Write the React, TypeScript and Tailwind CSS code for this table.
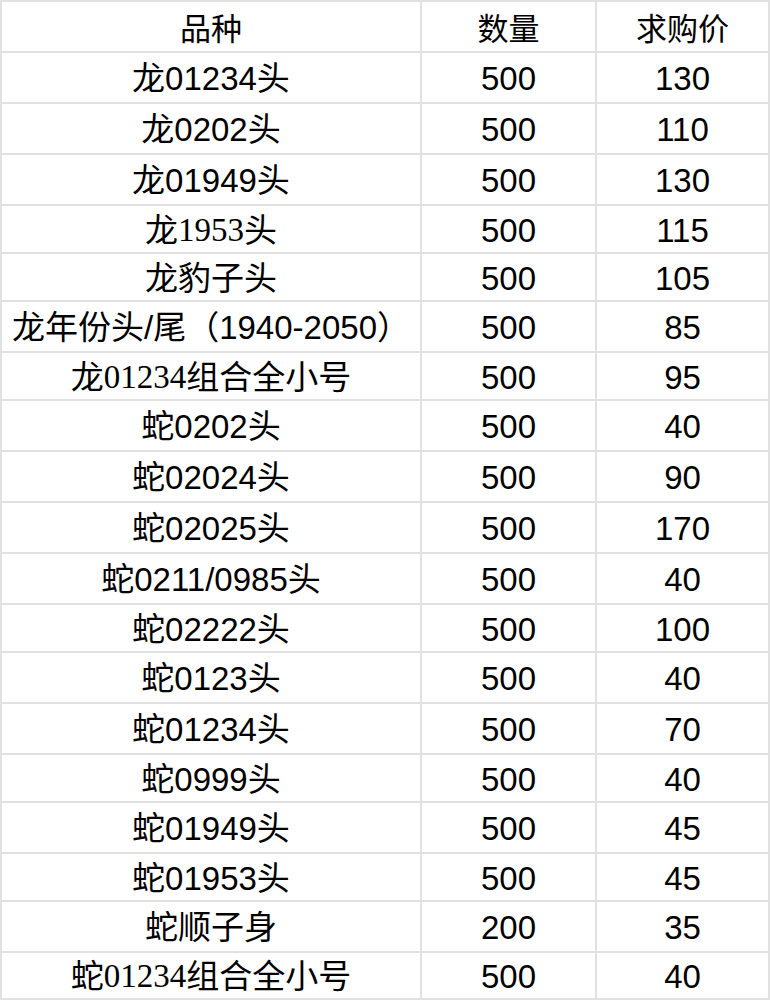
type Part = { text: string; serif?: boolean };

type Row = {
  name: Part[];
  qty: string;
  price: string;
  h: string;
};

const rows: Row[] = [
  { name: [{ text: '龙01234头' }], qty: '500', price: '130', h: 'h-[51px]' },
  { name: [{ text: '龙0202头' }], qty: '500', price: '110', h: 'h-[51px]' },
  { name: [{ text: '龙01949头' }], qty: '500', price: '130', h: 'h-[51px]' },
  { name: [{ text: '龙' }, { text: '1953', serif: true }, { text: '头' }], qty: '500', price: '115', h: 'h-[48px]' },
  { name: [{ text: '龙豹子头' }], qty: '500', price: '105', h: 'h-[48px]' },
  { name: [{ text: '龙年份头/尾（1940-2050）' }], qty: '500', price: '85', h: 'h-[51px]' },
  { name: [{ text: '龙' }, { text: '01234', serif: true }, { text: '组合全小号' }], qty: '500', price: '95', h: 'h-[48px]' },
  { name: [{ text: '蛇0202头' }], qty: '500', price: '40', h: 'h-[51px]' },
  { name: [{ text: '蛇02024头' }], qty: '500', price: '90', h: 'h-[51px]' },
  { name: [{ text: '蛇02025头' }], qty: '500', price: '170', h: 'h-[51px]' },
  { name: [{ text: '蛇0211/0985头' }], qty: '500', price: '40', h: 'h-[51px]' },
  { name: [{ text: '蛇02222头' }], qty: '500', price: '100', h: 'h-[48px]' },
  { name: [{ text: '蛇0123头' }], qty: '500', price: '40', h: 'h-[51px]' },
  { name: [{ text: '蛇01234头' }], qty: '500', price: '70', h: 'h-[51px]' },
  { name: [{ text: '蛇0999头' }], qty: '500', price: '40', h: 'h-[48px]' },
  { name: [{ text: '蛇01949头' }], qty: '500', price: '45', h: 'h-[51px]' },
  { name: [{ text: '蛇01953头' }], qty: '500', price: '45', h: 'h-[48px]' },
  { name: [{ text: '蛇顺子身' }], qty: '200', price: '35', h: 'h-[51px]' },
  { name: [{ text: '蛇' }, { text: '01234', serif: true }, { text: '组合全小号' }], qty: '500', price: '40', h: 'h-[47px]' },
];

const cell = 'flex items-center justify-center border-r-2 border-b-2 border-[#e1e1e1] whitespace-nowrap';

export default function App() {
  return (
    <div className="w-[770px] bg-white text-black font-['Liberation_Sans','Noto_Sans_CJK_SC',sans-serif] text-[33px] leading-none">
      <div className="border-t-2 border-l-2 border-[#e1e1e1]">
        {/* Header */}
        <div className="grid grid-cols-[420px_175px_173px] h-[51px]">
          <div className={`${cell} text-[31px] pt-[6px]`}>品种</div>
          <div className={`${cell} text-[31px] pt-[6px]`}>数量</div>
          <div className={`${cell} text-[31px] pt-[6px]`}>求购价</div>
        </div>

        {rows.map((r, i) => (
          <div key={i} className={`grid grid-cols-[420px_175px_173px] ${r.h}`}>
            <div className={`${cell} pt-[2px]`}>
              {r.name.map((p, j) =>
                p.serif ? (
                  <span key={j} className="font-['Liberation_Serif','Noto_Sans_CJK_SC',serif]">
                    {p.text}
                  </span>
                ) : (
                  <span key={j}>{p.text}</span>
                )
              )}
            </div>
            <div className={`${cell} pt-[2px]`}>{r.qty}</div>
            <div className={`${cell} pt-[2px]`}>{r.price}</div>
          </div>
        ))}
      </div>
    </div>
  );
}
